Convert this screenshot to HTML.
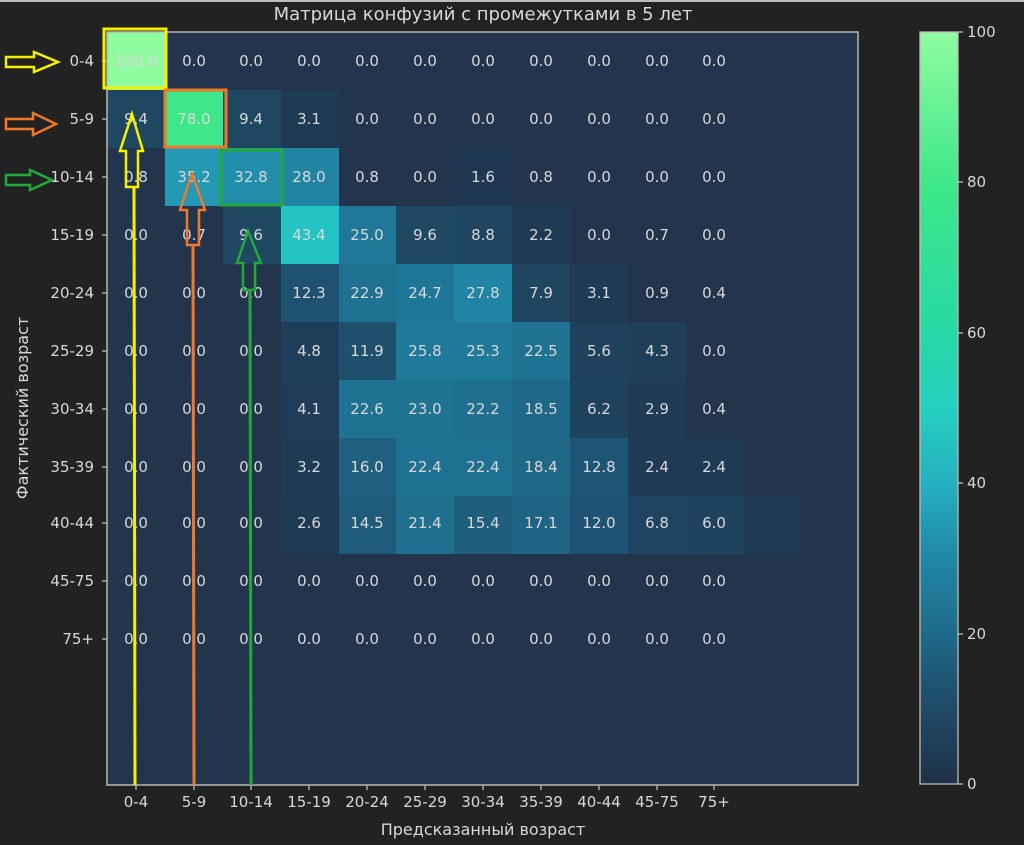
<!DOCTYPE html>
<html><head><meta charset="utf-8"><style>
html,body{margin:0;padding:0;background:#222222;width:1024px;height:845px;overflow:hidden}
svg{display:block}
text{font-family:"DejaVu Sans","Liberation Sans",sans-serif;fill:#d8d8d8}
</style></head><body>
<svg width="1024" height="845" viewBox="0 0 1024 845" xmlns="http://www.w3.org/2000/svg">
<defs>
<linearGradient id="cb" x1="0" y1="1" x2="0" y2="0">
<stop offset="0" stop-color="#1f3149"/>
<stop offset="0.1" stop-color="#1f4a66"/>
<stop offset="0.2" stop-color="#1f6a8a"/>
<stop offset="0.3" stop-color="#2088a5"/>
<stop offset="0.4" stop-color="#25b0c0"/>
<stop offset="0.5" stop-color="#25cfc0"/>
<stop offset="0.6" stop-color="#26d8a5"/>
<stop offset="0.8" stop-color="#3ee888"/>
<stop offset="1" stop-color="#90fca0"/>
</linearGradient>
</defs>
<rect x="0" y="0" width="1024" height="2" fill="#bbb"/>
<text x="483" y="20" font-size="18" text-anchor="middle">Матрица конфузий с промежутками в 5 лет</text>
<rect x="107" y="32" width="751" height="753" fill="#22354d"/>
<g id="cells">
<rect x="107" y="32" width="58" height="58" fill="#90fca0"/>
<rect x="107" y="90" width="58" height="58" fill="#1f4762"/>
<rect x="165" y="90" width="58" height="58" fill="#3ee888"/>
<rect x="223" y="90" width="58" height="58" fill="#1f4762"/>
<rect x="281" y="90" width="58" height="58" fill="#1f3a55"/>
<rect x="165" y="148" width="58" height="58" fill="#2599b3"/>
<rect x="223" y="148" width="58" height="58" fill="#218fab"/>
<rect x="281" y="148" width="58" height="58" fill="#2084a2"/>
<rect x="454" y="148" width="58" height="58" fill="#1f3752"/>
<rect x="223" y="206" width="58" height="58" fill="#1f4863"/>
<rect x="281" y="206" width="58" height="58" fill="#24c4c4"/>
<rect x="339" y="206" width="58" height="58" fill="#1f7898"/>
<rect x="396" y="206" width="58" height="58" fill="#1f4863"/>
<rect x="454" y="206" width="58" height="58" fill="#1f4560"/>
<rect x="512" y="206" width="58" height="58" fill="#1f3a54"/>
<rect x="281" y="264" width="58" height="58" fill="#1f5270"/>
<rect x="339" y="264" width="58" height="58" fill="#1f7292"/>
<rect x="396" y="264" width="58" height="58" fill="#1f7797"/>
<rect x="454" y="264" width="58" height="58" fill="#2084a4"/>
<rect x="512" y="264" width="58" height="58" fill="#1f4560"/>
<rect x="570" y="264" width="58" height="58" fill="#1f3a55"/>
<rect x="281" y="322" width="58" height="58" fill="#1f3e5a"/>
<rect x="339" y="322" width="58" height="58" fill="#1f516f"/>
<rect x="396" y="322" width="58" height="58" fill="#1f7a9a"/>
<rect x="454" y="322" width="58" height="58" fill="#1f7999"/>
<rect x="512" y="322" width="58" height="58" fill="#1f7292"/>
<rect x="570" y="322" width="58" height="58" fill="#1f415d"/>
<rect x="628" y="322" width="58" height="58" fill="#1f3e5a"/>
<rect x="281" y="380" width="58" height="58" fill="#1f3d59"/>
<rect x="339" y="380" width="58" height="58" fill="#1f7292"/>
<rect x="396" y="380" width="58" height="58" fill="#1f7393"/>
<rect x="454" y="380" width="58" height="58" fill="#1f7090"/>
<rect x="512" y="380" width="58" height="58" fill="#1f6888"/>
<rect x="570" y="380" width="58" height="58" fill="#1f425e"/>
<rect x="628" y="380" width="58" height="58" fill="#1f3b56"/>
<rect x="281" y="438" width="58" height="58" fill="#1f3b56"/>
<rect x="339" y="438" width="58" height="58" fill="#1f6080"/>
<rect x="396" y="438" width="58" height="58" fill="#1f7191"/>
<rect x="454" y="438" width="58" height="58" fill="#1f7191"/>
<rect x="512" y="438" width="58" height="58" fill="#1f6888"/>
<rect x="570" y="438" width="58" height="58" fill="#1f5574"/>
<rect x="628" y="438" width="58" height="58" fill="#1f3a55"/>
<rect x="686" y="438" width="58" height="58" fill="#1f3a55"/>
<rect x="281" y="496" width="58" height="58" fill="#1f3a55"/>
<rect x="339" y="496" width="58" height="58" fill="#1f5b7b"/>
<rect x="396" y="496" width="58" height="58" fill="#1f6f8f"/>
<rect x="454" y="496" width="58" height="58" fill="#1f5e7d"/>
<rect x="512" y="496" width="58" height="58" fill="#1f6484"/>
<rect x="570" y="496" width="58" height="58" fill="#1f5373"/>
<rect x="628" y="496" width="58" height="58" fill="#1f4360"/>
<rect x="686" y="496" width="58" height="58" fill="#1f425e"/>
<rect x="744" y="496" width="56" height="58" fill="#1f3a55"/>
</g>
<rect x="107" y="32" width="751" height="753" fill="none" stroke="#b8b8b8" stroke-width="1.5"/>
<g font-size="15" text-anchor="middle" fill="#e0e0e0">
<text x="136" y="66">100.0</text><text x="194" y="66">0.0</text><text x="251" y="66">0.0</text><text x="309" y="66">0.0</text><text x="367" y="66">0.0</text><text x="425" y="66">0.0</text><text x="483" y="66">0.0</text><text x="541" y="66">0.0</text><text x="599" y="66">0.0</text><text x="657" y="66">0.0</text><text x="714" y="66">0.0</text>
<text x="136" y="124">9.4</text><text x="194" y="124">78.0</text><text x="251" y="124">9.4</text><text x="309" y="124">3.1</text><text x="367" y="124">0.0</text><text x="425" y="124">0.0</text><text x="483" y="124">0.0</text><text x="541" y="124">0.0</text><text x="599" y="124">0.0</text><text x="657" y="124">0.0</text><text x="714" y="124">0.0</text>
<text x="136" y="182">0.8</text><text x="194" y="182">35.2</text><text x="251" y="182">32.8</text><text x="309" y="182">28.0</text><text x="367" y="182">0.8</text><text x="425" y="182">0.0</text><text x="483" y="182">1.6</text><text x="541" y="182">0.8</text><text x="599" y="182">0.0</text><text x="657" y="182">0.0</text><text x="714" y="182">0.0</text>
<text x="136" y="240">0.0</text><text x="194" y="240">0.7</text><text x="251" y="240">9.6</text><text x="309" y="240">43.4</text><text x="367" y="240">25.0</text><text x="425" y="240">9.6</text><text x="483" y="240">8.8</text><text x="541" y="240">2.2</text><text x="599" y="240">0.0</text><text x="657" y="240">0.7</text><text x="714" y="240">0.0</text>
<text x="136" y="298">0.0</text><text x="194" y="298">0.0</text><text x="251" y="298">0.0</text><text x="309" y="298">12.3</text><text x="367" y="298">22.9</text><text x="425" y="298">24.7</text><text x="483" y="298">27.8</text><text x="541" y="298">7.9</text><text x="599" y="298">3.1</text><text x="657" y="298">0.9</text><text x="714" y="298">0.4</text>
<text x="136" y="356">0.0</text><text x="194" y="356">0.0</text><text x="251" y="356">0.0</text><text x="309" y="356">4.8</text><text x="367" y="356">11.9</text><text x="425" y="356">25.8</text><text x="483" y="356">25.3</text><text x="541" y="356">22.5</text><text x="599" y="356">5.6</text><text x="657" y="356">4.3</text><text x="714" y="356">0.0</text>
<text x="136" y="414">0.0</text><text x="194" y="414">0.0</text><text x="251" y="414">0.0</text><text x="309" y="414">4.1</text><text x="367" y="414">22.6</text><text x="425" y="414">23.0</text><text x="483" y="414">22.2</text><text x="541" y="414">18.5</text><text x="599" y="414">6.2</text><text x="657" y="414">2.9</text><text x="714" y="414">0.4</text>
<text x="136" y="472">0.0</text><text x="194" y="472">0.0</text><text x="251" y="472">0.0</text><text x="309" y="472">3.2</text><text x="367" y="472">16.0</text><text x="425" y="472">22.4</text><text x="483" y="472">22.4</text><text x="541" y="472">18.4</text><text x="599" y="472">12.8</text><text x="657" y="472">2.4</text><text x="714" y="472">2.4</text>
<text x="136" y="528">0.0</text><text x="194" y="528">0.0</text><text x="251" y="528">0.0</text><text x="309" y="528">2.6</text><text x="367" y="528">14.5</text><text x="425" y="528">21.4</text><text x="483" y="528">15.4</text><text x="541" y="528">17.1</text><text x="599" y="528">12.0</text><text x="657" y="528">6.8</text><text x="714" y="528">6.0</text>
<text x="136" y="586">0.0</text><text x="194" y="586">0.0</text><text x="251" y="586">0.0</text><text x="309" y="586">0.0</text><text x="367" y="586">0.0</text><text x="425" y="586">0.0</text><text x="483" y="586">0.0</text><text x="541" y="586">0.0</text><text x="599" y="586">0.0</text><text x="657" y="586">0.0</text><text x="714" y="586">0.0</text>
<text x="136" y="644">0.0</text><text x="194" y="644">0.0</text><text x="251" y="644">0.0</text><text x="309" y="644">0.0</text><text x="367" y="644">0.0</text><text x="425" y="644">0.0</text><text x="483" y="644">0.0</text><text x="541" y="644">0.0</text><text x="599" y="644">0.0</text><text x="657" y="644">0.0</text><text x="714" y="644">0.0</text>
</g>
<g font-size="15" text-anchor="end" fill="#d8d8d8">
<text x="94" y="66">0-4</text><text x="94" y="124">5-9</text><text x="94" y="182">10-14</text><text x="94" y="240">15-19</text><text x="94" y="298">20-24</text><text x="94" y="356">25-29</text><text x="94" y="414">30-34</text><text x="94" y="472">35-39</text><text x="94" y="528">40-44</text><text x="94" y="586">45-75</text><text x="94" y="644">75+</text>
</g>
<g stroke="#bbb" stroke-width="1.3">
<line x1="102" y1="61" x2="107" y2="61"/><line x1="102" y1="119" x2="107" y2="119"/><line x1="102" y1="177" x2="107" y2="177"/><line x1="102" y1="235" x2="107" y2="235"/><line x1="102" y1="293" x2="107" y2="293"/><line x1="102" y1="351" x2="107" y2="351"/><line x1="102" y1="409" x2="107" y2="409"/><line x1="102" y1="467" x2="107" y2="467"/><line x1="102" y1="523" x2="107" y2="523"/><line x1="102" y1="581" x2="107" y2="581"/><line x1="102" y1="639" x2="107" y2="639"/>
<line x1="136" y1="785" x2="136" y2="790"/><line x1="194" y1="785" x2="194" y2="790"/><line x1="251" y1="785" x2="251" y2="790"/><line x1="309" y1="785" x2="309" y2="790"/><line x1="367" y1="785" x2="367" y2="790"/><line x1="425" y1="785" x2="425" y2="790"/><line x1="483" y1="785" x2="483" y2="790"/><line x1="541" y1="785" x2="541" y2="790"/><line x1="599" y1="785" x2="599" y2="790"/><line x1="657" y1="785" x2="657" y2="790"/><line x1="714" y1="785" x2="714" y2="790"/>
</g>
<g font-size="15" text-anchor="middle" fill="#d8d8d8">
<text x="136" y="807">0-4</text><text x="194" y="807">5-9</text><text x="251" y="807">10-14</text><text x="309" y="807">15-19</text><text x="367" y="807">20-24</text><text x="425" y="807">25-29</text><text x="483" y="807">30-34</text><text x="541" y="807">35-39</text><text x="599" y="807">40-44</text><text x="657" y="807">45-75</text><text x="714" y="807">75+</text>
</g>
<text x="483" y="835" font-size="16" text-anchor="middle">Предсказанный возраст</text>
<text transform="translate(28,408) rotate(-90)" font-size="16" text-anchor="middle">Фактический возраст</text>
<rect x="920" y="32" width="38" height="752" fill="url(#cb)" stroke="#bbb" stroke-width="1.3"/>
<g stroke="#bbb" stroke-width="1.3">
<line x1="958" y1="32" x2="963" y2="32"/><line x1="958" y1="182" x2="963" y2="182"/><line x1="958" y1="333" x2="963" y2="333"/><line x1="958" y1="483" x2="963" y2="483"/><line x1="958" y1="634" x2="963" y2="634"/><line x1="958" y1="784" x2="963" y2="784"/>
</g>
<g font-size="15" fill="#d8d8d8">
<text x="967" y="37">100</text><text x="967" y="187">80</text><text x="967" y="338">60</text><text x="967" y="488">40</text><text x="967" y="639">20</text><text x="967" y="789">0</text>
</g>
<g fill="none" stroke-width="3" stroke-linejoin="miter">
<rect x="104" y="29" width="62" height="59" stroke="#f5f000"/>
<rect x="165" y="90" width="61" height="57" stroke="#f07828"/>
<rect x="221" y="150" width="61" height="55" stroke="#22a83a"/>
<polygon points="6,57 34,57 34,52 58,62 34,72 34,67 6,67" stroke="#f5f000" stroke-width="2.5"/>
<polygon points="6,119 33,119 33,113 56,124 33,135 33,129 6,129" stroke="#f07828" stroke-width="2.5"/>
<polygon points="6,175 30,175 30,170 52,180 30,190 30,185 6,185" stroke="#22a83a" stroke-width="2.5"/>
<polygon points="132,114 143,151 138,151 138,187 126,187 126,151 120,151" stroke="#f5f000" stroke-width="2.5"/>
<line x1="134" y1="187" x2="135" y2="785" stroke="#f5f000" stroke-width="3"/>
<polygon points="192,174 205,210 199,210 199,245 187,245 187,210 180,210" stroke="#f07828" stroke-width="2.5"/>
<line x1="193" y1="245" x2="194" y2="785" stroke="#f07828" stroke-width="3"/>
<polygon points="248,231 261,263 255,263 255,290 243,290 243,263 237,263" stroke="#22a83a" stroke-width="2.5"/>
<line x1="250" y1="290" x2="251" y2="785" stroke="#22a83a" stroke-width="3"/>
</g>
</svg>
</body></html>
